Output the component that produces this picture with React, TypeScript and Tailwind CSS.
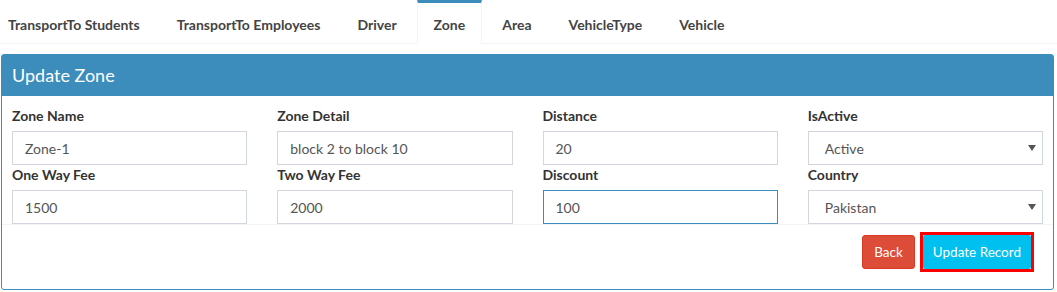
import React from "react";

const tabs = [
  "TransportTo Students",
  "TransportTo Employees",
  "Driver",
  "Zone",
  "Area",
  "VehicleType",
  "Vehicle",
];

type Field = {
  label: string;
  value: string;
  select?: boolean;
  focused?: boolean;
};

const fields: Field[] = [
  { label: "Zone Name", value: "Zone-1" },
  { label: "Zone Detail", value: "block 2 to block 10" },
  { label: "Distance", value: "20" },
  { label: "IsActive", value: "Active", select: true },
  { label: "One Way Fee", value: "1500" },
  { label: "Two Way Fee", value: "2000" },
  { label: "Discount", value: "100", focused: true },
  { label: "Country", value: "Pakistan", select: true },
];

function FieldBox({ f }: { f: Field }) {
  return (
    <div>
      <label className="block text-[14px] leading-[20px] font-bold text-[#333] mb-[5px]">
        {f.label}
      </label>
      {f.select ? (
        <div className="relative">
          <select
            defaultValue={f.value}
            className="block w-full h-[34px] appearance-none border border-[#d2d6de] bg-white pl-[16px] pr-8 text-[14px] text-[#555] outline-none"
          >
            <option>{f.value}</option>
          </select>
          {/* caret */}
          <svg
            className="absolute right-[7px] top-[14px] pointer-events-none"
            width="8"
            height="6"
            viewBox="0 0 8 6"
          >
            <path d="M0 0 H8 L4 6 Z" fill="#555" />
          </svg>
        </div>
      ) : (
        <input
          type="text"
          defaultValue={f.value}
          className={`block w-full h-[34px] border bg-white px-[12px] text-[14px] text-[#555] outline-none ${
            f.focused ? "border-[#3c8dbc]" : "border-[#d2d6de]"
          }`}
        />
      )}
    </div>
  );
}

export default function App() {
  return (
    <div className="w-[1057px] h-[292px] bg-white font-['Lato',sans-serif] overflow-hidden">
      {/* tabs */}
      <div className="flex border-b border-[#f4f4f4] h-[44px]">
        <div className="flex gap-[3px] -ml-[9px]">
          {tabs.map((t) => {
            const active = t === "Zone";
            return (
              <div
                key={t}
                className={`h-[44px] px-4 pt-[12px] border-t-[3px] text-[14px] leading-[20px] font-bold text-[#444] whitespace-nowrap ${
                  active
                    ? "border-[#3c8dbc] border-x border-x-[#f4f4f4] bg-white"
                    : "border-transparent border-x border-x-transparent"
                }`}
              >
                {t}
              </div>
            );
          })}
        </div>
      </div>

      {/* panel */}
      <div className="mt-[10px] ml-px mr-[3px] border border-[#3c8dbc] rounded-[3px] bg-white">
        <div className="bg-[#3c8dbc] h-[41px] pl-[10px] flex items-center text-white text-[18px]">
          Update Zone
        </div>
        <div className="px-[10px] pt-[10px] grid grid-cols-4 gap-x-[30px]">
          {fields.map((f) => (
            <FieldBox key={f.label} f={f} />
          ))}
        </div>
        <div className="border-t border-[#f4f4f4] pt-[10px] pb-[20px] pr-[19px] flex justify-end items-center">
          <button className="h-[34px] px-[11px] rounded-[3px] bg-[#dd4b39] border border-[#d73925] text-white text-[13.5px]">
            Back
          </button>
          <div className="ml-[5px] -my-[3px] border-[3px] border-[#ff0000]">
            <button className="block h-[34px] px-[10px] rounded-[2px] bg-[#00c0ef] text-white text-[13.5px]">
              Update Record
            </button>
          </div>
        </div>
      </div>
    </div>
  );
}
